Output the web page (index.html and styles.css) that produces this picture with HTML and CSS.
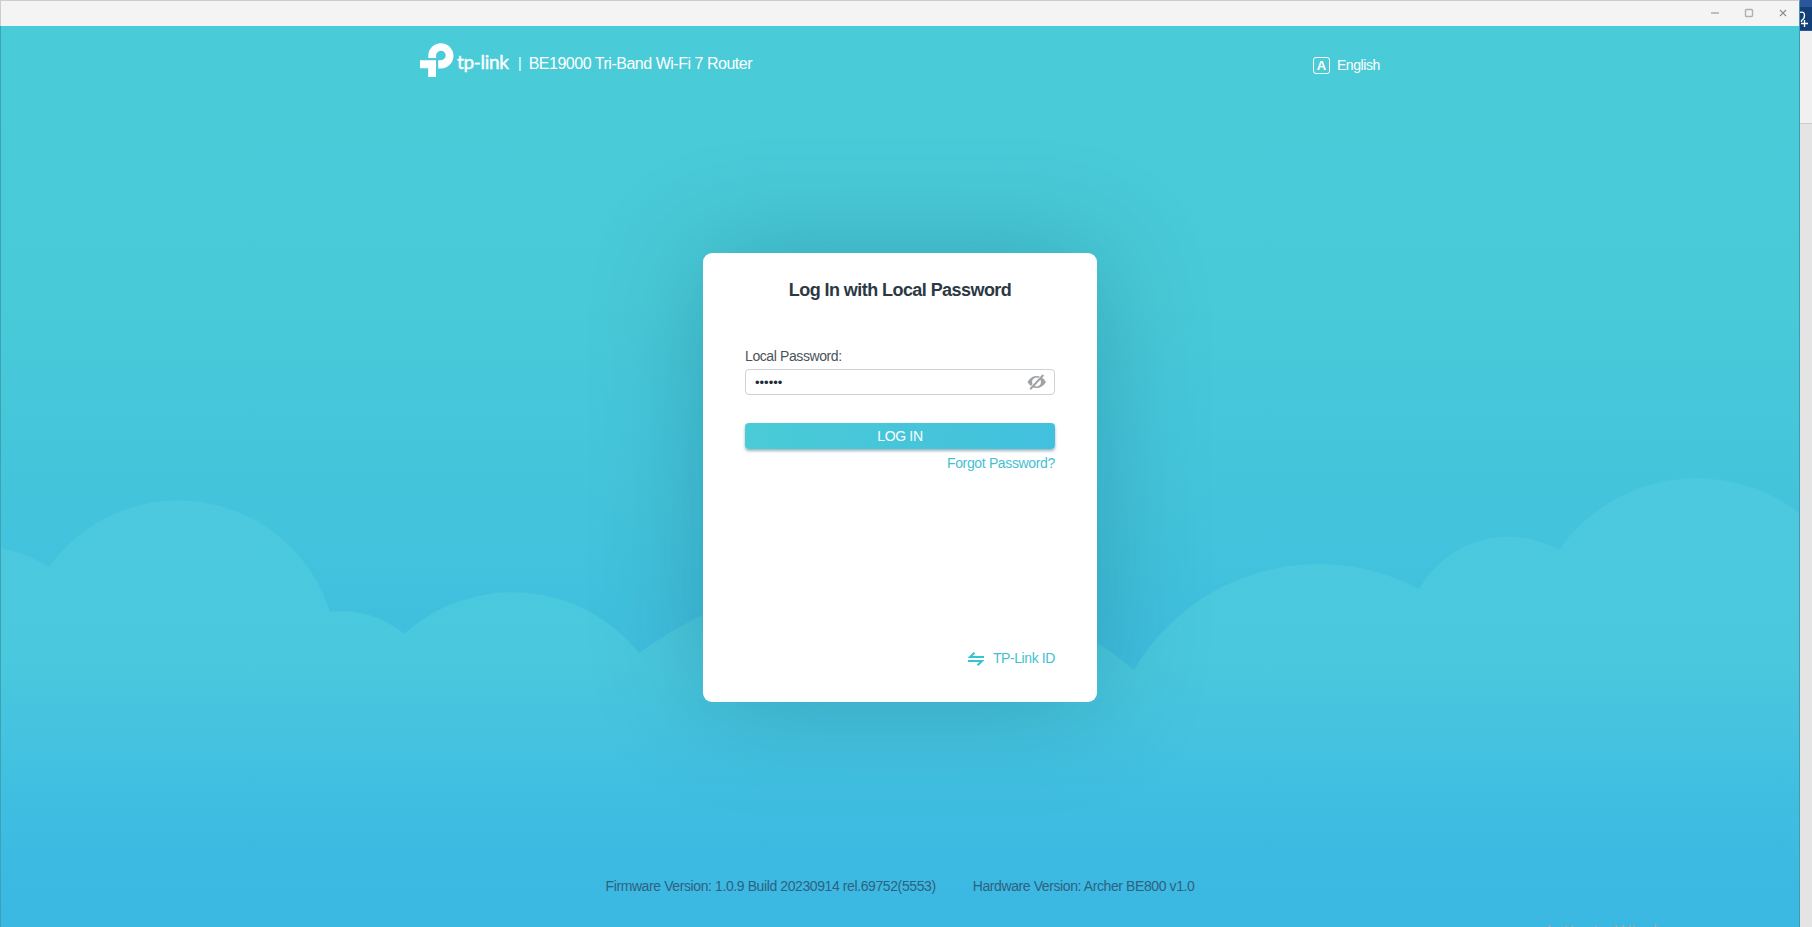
FILE: index.html
```html
<!DOCTYPE html>
<html lang="en">
<head>
<meta charset="UTF-8">
<meta name="viewport" content="width=device-width, initial-scale=1.0">
<title>BE19000 Tri-Band Wi-Fi 7 Router</title>
<link rel="stylesheet" href="styles.css">
</head>
<body>
<div class="desktop">
  <div class="window">
    <div class="title-bar">
      <svg class="win-btn" viewBox="0 0 10 10"><path d="M1 5h8" stroke="#bdbdbd" stroke-width="2"/></svg>
      <svg class="win-btn" viewBox="0 0 10 10"><rect x="1.5" y="1.5" width="7" height="7" rx="1" fill="none" stroke="#b0b0b0" stroke-width="1.4"/></svg>
      <svg class="win-btn" viewBox="0 0 10 10"><path d="M2 2l6 6M8 2l-6 6" stroke="#8c8c8c" stroke-width="1.1"/></svg>
    </div>

    <div class="page">
      <svg class="clouds" viewBox="0 0 1799 901" preserveAspectRatio="none">
        <defs>
          <linearGradient id="cloud-fill" x1="0" y1="453" x2="0" y2="901" gradientUnits="userSpaceOnUse">
            <stop offset="0" stop-color="#4cc9de"/>
            <stop offset="0.4" stop-color="#4ac8de"/>
            <stop offset="0.84" stop-color="#3cbae2"/>
            <stop offset="1" stop-color="#3bb8e2"/>
          </linearGradient>
        </defs>
        <path fill="url(#cloud-fill)" d="M0 522Q27 527 49 541A159 159 0 0 1 330 586Q371 581 404 608A162 162 0 0 1 639 627A400 400 0 0 1 1134 644A214 214 0 0 1 1419 563A103 103 0 0 1 1559 524A168 168 0 0 1 1799 487V901H0Z"/>
      </svg>

      <header class="header">
        <div class="brand">
          <svg class="logo" viewBox="0 0 34 34">
            <path fill="#fff" d="M0 17.3H16V34H8.2V25.2H0zM8.3 15V12.6A12.600 12.600 0 1 1 21 25.400H18.200V17.300H21A4.800 4.800 0 1 0 16.100 12.600V15z"/>
          </svg>
          <span class="logo-text">tp-link</span>
          <span class="divider">|</span>
          <span class="model">BE19000 Tri-Band Wi-Fi 7 Router</span>
        </div>
        <div class="language">
          <span class="lang-icon">A</span>
          <span>English</span>
        </div>
      </header>

      <main class="login-card">
        <h1>Log In with Local Password</h1>
        <label for="password">Local Password:</label>
        <div class="password-box">
          <input type="text" id="password" value="••••••">
          <svg class="eye" viewBox="0 0 20 16">
            <path fill="#a0a3a6" fill-rule="evenodd" d="M.5 8C3 3.800 6 2 9.500 2S16.500 3.800 19 8C16.500 12.200 13 14 9.500 14S3 12.200.5 8zM9.500 3.600a4.400 4.400 0 1 0 .01 0z"/>
            <path d="M3.500 13.500L15 1" stroke="#fff" stroke-width="1.400"/>
            <path d="M3.200 15.200L16.300 1" stroke="#a0a3a6" stroke-width="2"/>
          </svg>
        </div>
        <button type="button" class="login-btn">LOG IN</button>
        <a class="forgot">Forgot Password?</a>
        <a class="switch">
          <svg class="switch-icon" viewBox="0 0 16 14">
            <path d="M16 5H2L6.500.7M0 9H14L9.500 13.300" fill="none" stroke="#36c3d2" stroke-width="2"/>
          </svg>
          <span>TP-Link ID</span>
        </a>
      </main>

      <footer class="footer">
        <span class="firmware">Firmware Version: 1.0.9 Build 20230914 rel.69752(5553)</span>
        <span class="hardware">Hardware Version: Archer BE800 v1.0</span>
      </footer>
      <div class="watermark">Activate Windows</div>
    </div>
  </div>

  <div class="side">
    <div class="side-top"></div>
    <div class="side-head">
      <svg viewBox="0 0 12 24"><path d="M0 5.500Q4.500 4 4.500 8.500Q4.500 12 1.500 13.500V15M1 16.500h7M4.500 13v7" fill="none" stroke="#fff" stroke-width="1.300"/></svg>
    </div>
    <div class="side-panel"></div>
    <div class="side-body"></div>
  </div>
</div>
</body>
</html>
```

FILE: styles.css
```css
* {
  box-sizing: border-box;
}

body {
  margin: 0;
  font-family: "Liberation Sans", Arial, sans-serif;
  font-size: 14px;
  letter-spacing: -0.4px;
  overflow: hidden;
}

.desktop {
  display: flex;
  width: 1812px;
  height: 927px;
}

.window {
  width: 1800px;
  display: flex;
  flex-direction: column;
  border-top: 1px solid #cdcdcf;
  border-right: 1px solid #4797ae;
}

.title-bar {
  height: 25px;
  display: flex;
  justify-content: flex-end;
  align-items: center;
  gap: 24px;
  padding: 0 11px 1px 0;
  background-color: #f4f4f4;
  border-left: 1px solid #cdcdcf;
}

.win-btn {
  width: 10px;
  height: 10px;
}

.page {
  position: relative;
  flex: 1;
  display: flex;
  flex-direction: column;
  align-items: center;
  overflow: hidden;
  border-left: 1px solid #3ba4b4;
  background: linear-gradient(#4acbd8 0%, #49cad8 30%, #42c2dd 60%, #3ebcdf 75%, #3bb8e2 100%);
}

.clouds {
  position: absolute;
  left: -1px;
  top: 0;
  width: 1799px;
  height: 901px;
}

.header {
  position: relative;
  width: 960px;
  height: 76px;
  display: flex;
  justify-content: space-between;
  color: #fff;
}

.brand {
  display: flex;
  align-items: flex-start;
  padding-top: 17px;
}

.logo {
  width: 34px;
  height: 34px;
}

.logo-text {
  margin: 7px 0 0 3px;
  width: 54px;
  font-family: Lato, sans-serif;
  font-size: 19px;
  line-height: 24px;
  letter-spacing: -0.3px;
  -webkit-text-stroke: 0.4px #fff;
}

.divider {
  margin: 11px 0 0 7px;
  line-height: 18px;
  letter-spacing: 0;
}

.model {
  margin: 12px 0 0 7px;
  font-size: 16px;
  line-height: 18px;
  letter-spacing: -0.48px;
}

.language {
  display: flex;
  align-items: center;
  height: 18px;
  margin-top: 30px;
  gap: 7px;
}

.lang-icon {
  width: 17px;
  height: 17px;
  border: 1.5px solid #fff;
  border-radius: 3px;
  font-size: 13px;
  font-weight: bold;
  line-height: 15px;
  letter-spacing: 0;
  text-align: center;
}

.login-card {
  position: relative;
  width: 394px;
  height: 449px;
  margin-top: 151px;
  padding: 25px 42px 0;
  display: flex;
  flex-direction: column;
  background-color: #fff;
  border-radius: 9px;
  box-shadow: 0 0 110px rgba(0, 60, 80, 0.26);
}

h1 {
  margin: 0 0 45px;
  font-size: 18px;
  line-height: 24px;
  letter-spacing: -0.56px;
  text-align: center;
  color: #2c3943;
}

label {
  line-height: 18px;
  color: #4a5359;
}

.password-box {
  display: flex;
  align-items: center;
  height: 26px;
  margin-top: 4px;
  padding: 0 7px 0 9px;
  border: 1px solid #cfd1d3;
  border-radius: 4px;
}

.password-box input {
  flex: 1;
  padding: 0;
  border: none;
  outline: none;
  background: none;
  font-family: "Liberation Sans", Arial, sans-serif;
  font-size: 13px;
  letter-spacing: 0;
  color: #1c2c38;
}

.eye {
  width: 20px;
  height: 16px;
}

.login-btn {
  height: 26px;
  margin-top: 28px;
  padding: 0;
  border: none;
  border-radius: 4px;
  color: #fff;
  font-family: "Liberation Sans", Arial, sans-serif;
  font-size: 14px;
  letter-spacing: -0.35px;
  background: linear-gradient(100deg, #4acbd6, #42c0de);
  box-shadow: 0 2px 3px rgba(0, 70, 90, 0.4);
}

.forgot {
  align-self: flex-end;
  margin-top: 5px;
  line-height: 18px;
  letter-spacing: -0.35px;
  color: #44bfd2;
}

.switch {
  display: flex;
  align-items: center;
  gap: 9px;
  align-self: flex-end;
  margin-top: 177px;
  line-height: 18px;
  color: #44bfd2;
}

.switch-icon {
  width: 16px;
  height: 14px;
  margin-top: 2px;
}

.footer {
  position: relative;
  display: flex;
  gap: 37px;
  margin-top: 175px;
  line-height: 18px;
  color: #2f6180;
}

.watermark {
  position: absolute;
  left: 1542px;
  top: 893px;
  font-family: "Open Sans", sans-serif;
  font-size: 18px;
  line-height: 24px;
  letter-spacing: 0;
  color: #9aa5ab;
}

.side {
  width: 12px;
  display: flex;
  flex-direction: column;
}

.side-top {
  height: 7px;
  background-color: #2b579a;
}

.side-head {
  height: 24px;
  background-color: #133f78;
  border-bottom: 1px solid #2b579a;
}

.side-head svg {
  display: block;
  width: 12px;
  height: 24px;
}

.side-panel {
  height: 93px;
  background-color: #f0f0f0;
  border-bottom: 1px solid #cbcbcb;
}

.side-body {
  flex: 1;
  background-color: #e4e4e4;
}
```
